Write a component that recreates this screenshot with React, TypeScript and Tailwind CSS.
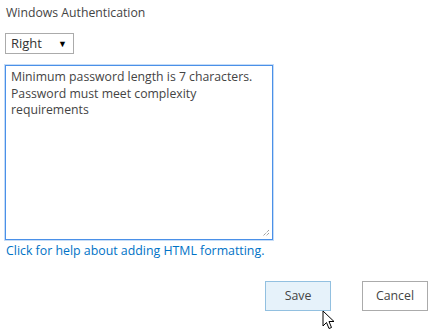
export default function App() {
  return (
    <div className="relative w-[432px] h-[331px] bg-white text-[12.35px] text-[#444] overflow-hidden font-['Open_Sans',sans-serif]">
      <div className="pl-[5px] pt-[4px]">
        {/* Section label */}
        <div className="pl-px leading-[18px] text-[12.25px]">Windows Authentication</div>

        {/* Alignment dropdown */}
        <div className="mt-[11px] flex items-center justify-between w-[69px] h-[21px] border border-[#ababab] pl-[5px] pr-[6px] text-[#333]">
          <span className="leading-none text-[13px]">Right</span>
          <span className="text-[9px] leading-none text-black">▼</span>
        </div>

        {/* Message textarea */}
        <div className="relative mt-[11px] w-[268px] h-[175px] border border-[#4a90e8] shadow-[0_0_0_1px_#c5dcf7] px-[5px] py-[3px] leading-[16.5px] text-[12.25px] text-[#444]">
          <p>
            Minimum password length is 7 characters.
            <br />
            Password must meet complexity
            <br />
            requirements
          </p>
          <svg className="absolute right-[2px] bottom-[2px]" width="8" height="8" viewBox="0 0 8 8">
            <path d="M7 1 L1 7 M7 4 L4 7" stroke="#777" strokeWidth="1" strokeDasharray="1 1" />
          </svg>
        </div>

        <a className="block mt-[2px] pl-px leading-[18px] text-[#0072c6] cursor-pointer">
          Click for help about adding HTML formatting.
        </a>

        {/* Actions */}
        <div className="mt-[21px] pr-[4px] flex justify-end gap-[31px]">
          <button className="w-[66px] h-[30px] bg-[#e6f2fa] border border-[#92c0e0] text-[#444]">Save</button>
          <button className="w-[66px] h-[30px] bg-white border border-[#ababab] text-[#444]">Cancel</button>
        </div>
      </div>

      {/* Mouse pointer over the Save button */}
      <svg className="absolute left-[322px] top-[310px]" width="14" height="20" viewBox="0 0 14 20">
        <path d="M1 1 L1 16 L4.5 12.5 L7 18.5 L9.5 17.5 L7 11.5 L12 11.5 Z" fill="#fff" stroke="#000" strokeWidth="1" strokeLinejoin="round" />
      </svg>
    </div>
  )
}
